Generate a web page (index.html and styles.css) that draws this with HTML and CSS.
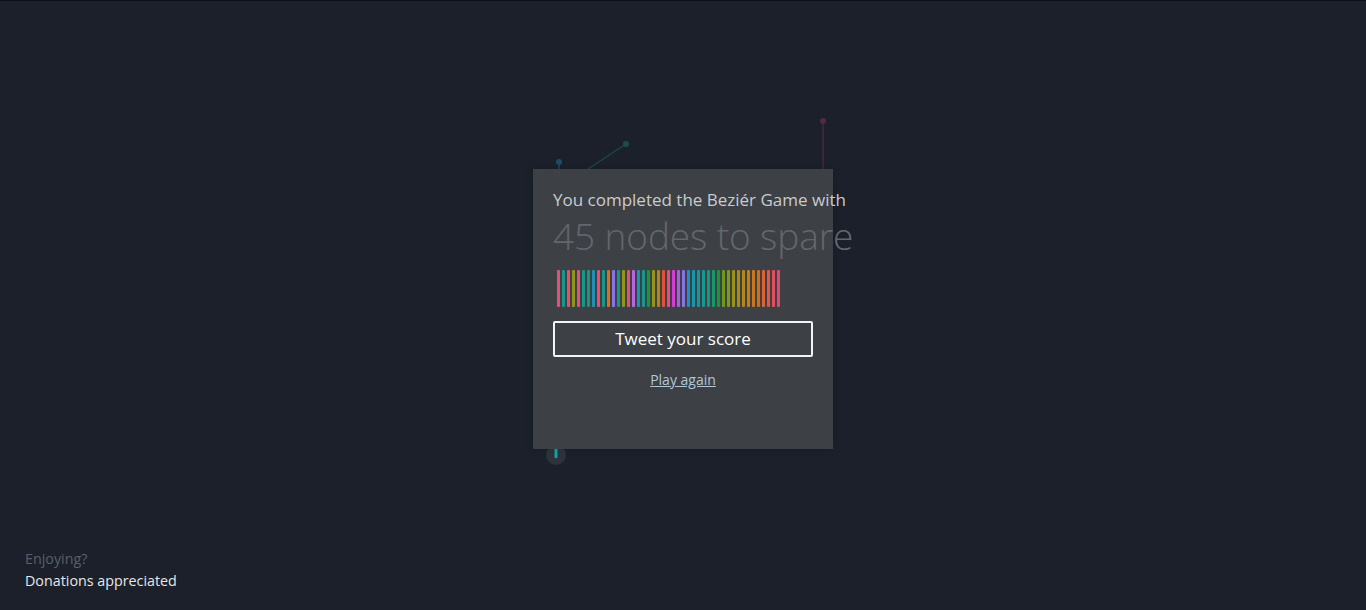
FILE: index.html
```html
<!DOCTYPE html>
<html lang="en">
<head>
<meta charset="utf-8">
<title>The Bezier Game</title>
<link rel="stylesheet" href="styles.css">
</head>
<body>
<div class="page">
  <svg class="canvas" width="1366" height="609" viewBox="0 0 1366 609">
    <line x1="559" y1="161" x2="559" y2="175" stroke="#1f4a5c" stroke-width="1.5"/>
    <circle cx="559" cy="161" r="3" fill="#1d4d63"/>
    <line x1="585" y1="170" x2="626" y2="143" stroke="#1d4a4c" stroke-width="1.2"/>
    <circle cx="626" cy="143" r="3" fill="#1d4c4e"/>
    <line x1="823" y1="120" x2="823" y2="175" stroke="#4a2a3c" stroke-width="1.5"/>
    <circle cx="823" cy="120" r="3" fill="#52293e"/>
    <circle cx="556" cy="454" r="10" fill="#2d333c"/>
    <rect x="554.5" y="446" width="3" height="11" rx="1" fill="#11a6a0"/>
  </svg>

  <div class="overlay">
    <section class="modal">
      <p class="lead">You completed the Beziér Game with</p>
      <h1 class="score">45 nodes to spare</h1>
      <div class="bars" id="bars"></div>
      <button class="tweet" type="button">Tweet your score</button>
      <a class="again" href="#">Play again</a>
    </section>
  </div>

  <footer class="footer">
    <div class="enjoy">Enjoying?</div>
    <a class="donate" href="#">Donations appreciated</a>
  </footer>
</div>
<script>
  var colors = ["#f0507c","#11a090","#f0507c","#9a9a12","#f0507c","#11a090","#11a088","#1a98c2","#f0507c","#11a090","#e07812","#9478ee","#11a090","#9a9a12","#f0507c","#c468ee","#1a98c2","#11a090","#12a042","#9a9a12","#c08a12","#f05432","#f44a8e","#e43ce6","#b062f0","#8a7af0","#1a98d0","#11a0b0","#11a0a2","#11a098","#11a084","#11a070","#12a034","#74a012","#8aa012","#a09a12","#b09212","#c08c12","#d08412","#d87c12","#e07212","#f06432","#f05a42","#f04e62","#f04a72"];
  var wrap = document.getElementById("bars");
  colors.forEach(function (c) {
    var b = document.createElement("span");
    b.className = "bar";
    b.style.background = c;
    wrap.appendChild(b);
  });
</script>
</body>
</html>
```

FILE: styles.css
```css
* { box-sizing: border-box; }
html, body {
  margin: 0;
  padding: 0;
  height: 100%;
}
body {
  background: #1b202b;
  font-family: "Open Sans", "Noto Sans", sans-serif;
  border-top: 1px solid #0d0e11;
  overflow: hidden;
}
.page {
  position: relative;
  height: 609px;
}
.canvas {
  position: absolute;
  left: 0;
  top: 0;
}
.overlay {
  position: absolute;
  inset: 0;
  display: flex;
  justify-content: center;
  align-items: flex-start;
  padding-top: 168px;
}
.modal {
  width: 300px;
  height: 280px;
  background: rgba(62, 66, 70, 0.98);
  padding: 18px 20px 0;
  display: flex;
  flex-direction: column;
  align-items: flex-start;
  box-shadow: 0 0 8px rgba(0,0,0,0.15);
}
.lead {
  margin: 0;
  font-size: 17px;
  line-height: 26px;
  color: #c9cbcd;
  white-space: nowrap;
}
.score {
  margin: 0;
  font-weight: 300;
  font-size: 37px;
  line-height: 46px;
  color: #63676d;
  white-space: nowrap;
  letter-spacing: -0.1px;
}
.bars {
  display: flex;
  gap: 2px;
  margin: 11px 0 0 4px;
  height: 37px;
}
.bar {
  width: 3px;
  height: 37px;
  border-radius: 1px;
  opacity: 0.92;
}
.tweet {
  margin-top: 14px;
  width: 260px;
  height: 36px;
  background: transparent;
  border: 2px solid #f4f4f4;
  border-radius: 2px;
  color: #ffffff;
  font-family: "Open Sans", "Noto Sans", sans-serif;
  font-size: 17px;
  padding: 0;
  line-height: 30px;
}
.again {
  align-self: center;
  margin-top: 13px;
  font-size: 14px;
  color: #b2c6da;
  text-decoration: underline;
  line-height: 20px;
}
.footer {
  position: absolute;
  left: 25px;
  bottom: 18px;
  font-size: 14.3px;
  line-height: 22px;
}
.enjoy {
  color: #5a5f68;
}
.donate {
  color: #e6e7e9;
  text-decoration: none;
}
```
